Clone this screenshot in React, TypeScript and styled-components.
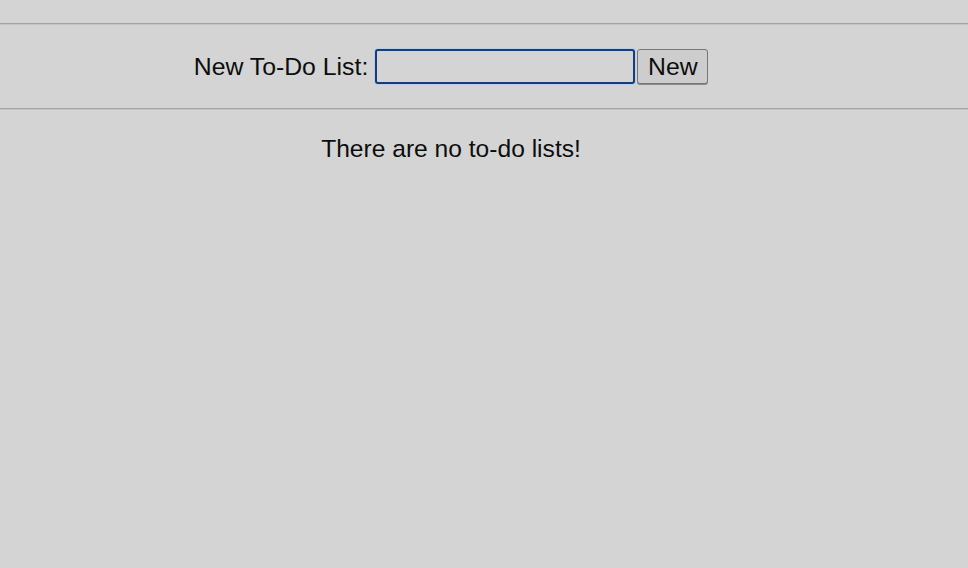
import React from "react";
import styled, { createGlobalStyle } from "styled-components";

const Global = createGlobalStyle`
  html, body {
    margin: 0;
    padding: 0;
    background: #d4d4d4;
  }
  body {
    font-family: "Liberation Sans", Arial, Helvetica, sans-serif;
    color: #0d0d0d;
  }
`;

const Page = styled.div`
  width: 902px;
  min-height: 568px;
  display: flex;
  flex-direction: column;
`;

const Rule = styled.hr`
  margin: 0;
  border: none;
  height: 2px;
  width: 968px;
  background: linear-gradient(#a3a3a3 0 50%, #c4c4c4 50% 100%);
`;

const Spacer = styled.div<{ $h: number }>`
  height: ${(p) => p.$h}px;
`;

const Form = styled.form`
  display: flex;
  justify-content: center;
  align-items: center;
  height: 35px;
  margin: 24px 0 24px;
  font-size: 24.8px;
`;

const Label = styled.label`
  margin-right: 7px;
  line-height: 35px;
`;

const Input = styled.input`
  box-sizing: border-box;
  width: 260px;
  height: 35px;
  margin: 0 2px 0 0;
  border: 2px solid #173c78;
  border-radius: 3px;
  background: #d4d4d4;
  box-shadow: 0 0 0 1px #b9cde8;
  outline: none;
  font: inherit;
`;

const Button = styled.button`
  box-sizing: border-box;
  width: 71px;
  height: 35px;
  padding: 0;
  border: 1px solid #767676;
  border-radius: 3px;
  background: #cdcdcd;
  box-shadow: 0 1px 0 #8a8a8a;
  font-family: inherit;
  font-size: 24.8px;
  color: #0d0d0d;
`;

const Empty = styled.p`
  margin: 25px 0 0;
  text-align: center;
  font-size: 24.6px;
  line-height: 28px;
`;

export default function App() {
  return (
    <>
      <Global />
      <Page>
        <Spacer $h={23} />
        <Rule />
        <Form onSubmit={(e) => e.preventDefault()}>
          <Label htmlFor="newlist">New To-Do List:</Label>
          <Input id="newlist" type="text" />
          <Button type="submit">New</Button>
        </Form>
        <Rule />
        <Empty>There are no to-do lists!</Empty>
      </Page>
    </>
  );
}
